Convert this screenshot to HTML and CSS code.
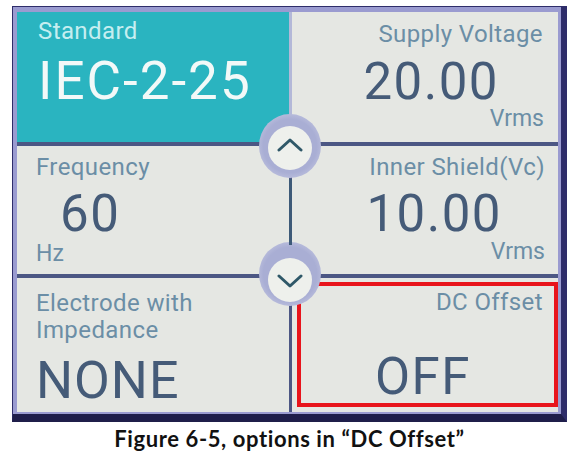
FILE: index.html
```html
<!DOCTYPE html>
<html>
<head>
<meta charset="utf-8">
<link rel="stylesheet" href="styles.css">
</head>
<body>
<div class="figure">
  <div class="screen">
    <div class="grid">
      <div class="cell teal">
        <div class="label">Standard</div>
        <div class="big std">IEC-2-25</div>
      </div>
      <div class="cell right">
        <div class="label">Supply Voltage</div>
        <div class="big val1">20.00</div>
        <div class="unit u1">Vrms</div>
      </div>
      <div class="cell left c3">
        <div class="label">Frequency</div>
        <div class="big freq">60</div>
        <div class="unit hz">Hz</div>
      </div>
      <div class="cell right c4">
        <div class="label">Inner Shield(Vc)</div>
        <div class="big val2">10.00</div>
        <div class="unit u2">Vrms</div>
      </div>
      <div class="cell left c5">
        <div class="label two">Electrode with<br>Impedance</div>
        <div class="big none">NONE</div>
      </div>
      <div class="cell c6">
        <div class="hl">
          <div class="label">DC Offset</div>
          <div class="big off">OFF</div>
        </div>
      </div>
    </div>
    <div class="knob up">
      <div class="knob-in">
        <svg width="26" height="14" viewBox="0 0 26 14"><polyline points="2,12 13,2 24,12" fill="none" stroke="#2f5868" stroke-width="3" stroke-linecap="round" stroke-linejoin="round"/></svg>
      </div>
    </div>
    <div class="knob down">
      <div class="knob-in">
        <svg width="26" height="14" viewBox="0 0 26 14"><polyline points="2,2 13,12 24,2" fill="none" stroke="#2f5868" stroke-width="3" stroke-linecap="round" stroke-linejoin="round"/></svg>
      </div>
    </div>
    <div class="vline"></div>
  </div>
  <div class="caption">Figure 6-5, options in “DC Offset”</div>
</div>
</body>
</html>
```
FILE: styles.css
```css
html, body {
  margin: 0;
  padding: 0;
  background: #ffffff;
}
.figure {
  padding: 6px 0 0 12px;
  width: 555px;
}
.screen {
  position: relative;
  width: 555px;
  height: 416px;
  box-sizing: border-box;
  background: #2e2d6a;
  border-style: solid;
  border-color: #2e2d6a #2e2d6a #1f1e4a #2e2d6a;
  border-width: 1px 6px 8px 1px;
  font-family: Roboto, "Noto Sans", sans-serif;
}
.grid {
  box-sizing: border-box;
  height: 407px;
  display: grid;
  grid-template-columns: 272px 266px;
  grid-template-rows: 130px 128px 134px;
  column-gap: 3px;
  row-gap: 4px;
  background: #4c5784;
  border-style: solid;
  border-color: #9a9bd0;
  border-width: 5px 3px 2px 4px;
}
.cell {
  background: #e5e7e3;
  display: flex;
  flex-direction: column;
  box-sizing: border-box;
  color: #455b78;
}
.label {
  font-size: 24px;
  line-height: 24px;
  letter-spacing: 0.4px;
  color: #6b8ea6;
  white-space: nowrap;
}
.big {
  font-size: 51px;
  line-height: 51px;
  letter-spacing: 1.5px;
  white-space: nowrap;
}
.unit {
  font-size: 23px;
  line-height: 22px;
  color: #6b8ea6;
}
.teal {
  background: #2ab4c0;
  padding: 7px 0 0 21px;
  box-shadow: 3px 0 0 #b3b8d8;
}
.teal .label {
  color: #c6eef0;
}
.std {
  font-size: 53px;
  line-height: 53px;
  letter-spacing: 2px;
  color: #f2f9f8;
  margin-top: 12px;
}
.right {
  padding: 10px 15px 0 0;
  text-align: right;
}
.val1 {
  margin-top: 10px;
  margin-right: 44px;
}
.u1 {
  margin-top: 1px;
  margin-right: -1px;
}
.left {
  padding: 9px 0 0 19px;
}
.freq {
  margin-top: 9px;
  margin-left: 24px;
}
.hz {
  margin-top: 4px;
}
.c4 {
  padding: 9px 13px 0 0;
}
.val2 {
  margin-top: 9px;
  margin-right: 43px;
}
.u2 {
  margin-top: 2px;
}
.c5 {
  padding-top: 12px;
}
.two {
  line-height: 27px;
}
.none {
  font-size: 52px;
  line-height: 52px;
  letter-spacing: 1px;
  margin-top: 11px;
}
.c6 {
  padding: 4px 0 5px 5px;
}
.hl {
  flex: 1;
  border: 4px solid #e8141c;
  display: flex;
  flex-direction: column;
  padding: 4px 11px 0 74px;
}
.hl .label {
  text-align: right;
}
.off {
  margin-top: 37px;
  letter-spacing: 1.5px;
}
.knob {
  position: absolute;
  width: 62px;
  height: 64px;
  border-radius: 50%;
  background: radial-gradient(circle, #a9aed4 60%, #c5c8e2 85%, rgba(220,222,238,0.6) 100%);
  display: flex;
  justify-content: center;
  align-items: flex-end;
  box-sizing: border-box;
}
.knob.up {
  left: 246px;
  top: 107px;
  padding-bottom: 6px;
}
.knob.down {
  left: 246px;
  top: 235px;
}
.knob-in {
  width: 44px;
  height: 44px;
  border-radius: 50%;
  background: #eef0ec;
  display: flex;
  align-items: center;
  justify-content: center;
  margin-bottom: 2px;
}
.knob.down .knob-in {
  margin-bottom: 4px;
}
.up svg {
  margin-top: -6px;
}
.down svg {
  margin-top: 2px;
}
.vline {
  position: absolute;
  left: 276px;
  top: 172px;
  width: 3px;
  height: 66px;
  background: #3d5a78;
}
.caption {
  margin-top: 4px;
  font-family: Lato, "Open Sans", sans-serif;
  font-weight: bold;
  font-size: 22px;
  line-height: 26px;
  letter-spacing: 0.6px;
  text-align: center;
  color: #111111;
}
```
